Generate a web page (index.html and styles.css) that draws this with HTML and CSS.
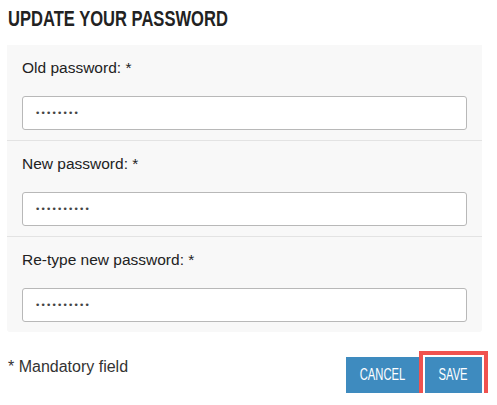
FILE: index.html
```html
<!DOCTYPE html>
<html lang="en">
<head>
<meta charset="utf-8">
<title>Update your password</title>
<link rel="stylesheet" href="styles.css">
</head>
<body>
<div class="page">
  <h1 class="title"><span class="condensed">UPDATE YOUR PASSWORD</span></h1>
  <form class="panel">
    <div class="field">
      <label class="label" for="old">Old password: *</label>
      <input class="input" id="old" type="text" value="••••••••">
    </div>
    <div class="field">
      <label class="label" for="new">New password: *</label>
      <input class="input" id="new" type="text" value="••••••••••">
    </div>
    <div class="field">
      <label class="label" for="re">Re-type new password: *</label>
      <input class="input" id="re" type="text" value="••••••••••">
    </div>
  </form>
  <div class="footer">
    <span class="note">* Mandatory field</span>
    <div class="actions">
      <button class="btn btn-cancel" type="button"><span class="btn-text">CANCEL</span></button>
      <button class="btn btn-save btn-focus" type="button"><span class="btn-text">SAVE</span></button>
    </div>
  </div>
</div>
</body>
</html>
```

FILE: styles.css
```css
* { box-sizing: border-box; }
html, body { margin: 0; background: #fff; }
body { font-family: "Liberation Sans", Arial, sans-serif; color: #222; }
.page { width: 482px; padding-left: 7px; }
.title {
  margin: 0;
  padding: 7px 0 0 1px;
  height: 45px;
  font-family: "Liberation Sans", Arial, sans-serif;
  font-weight: bold;
  font-size: 21.5px;
  line-height: 24px;
  color: #222;
  white-space: nowrap;
}
.condensed {
  display: inline-block;
  transform: scaleX(0.77);
  transform-origin: 0 50%;
}
.panel {
  background: #f8f8f8;
  border-radius: 0 0 3px 3px;
  display: flex;
  flex-direction: column;
}
.field {
  display: flex;
  flex-direction: column;
  padding: 14px 15px 10px;
  border-bottom: 1px solid #e3e3e3;
}
.field:last-child { border-bottom: 0; }
.label {
  font-size: 15.5px;
  line-height: 18px;
  margin-bottom: 19px;
  color: #222;
}
.input {
  height: 34px;
  border: 1px solid #b8b8b8;
  border-radius: 3px;
  background: #fff;
  padding: 0 12px;
  font-family: "DejaVu Sans", sans-serif;
  font-size: 9px;
  letter-spacing: 0.2px;
  color: #444;
  outline: none;
}
.footer {
  display: flex;
  justify-content: space-between;
  align-items: flex-start;
  margin-top: 25px;
}
.note {
  padding: 1px 0 0 1px;
  font-size: 16px;
  line-height: 18px;
  color: #333;
}
.actions { display: flex; gap: 6px; }
.btn {
  height: 36px;
  border: 0;
  border-radius: 0;
  background: #3e8bbf;
  color: #fff;
  font-family: "Liberation Sans", Arial, sans-serif;
  font-size: 17px;
  padding: 0;
  display: flex;
  align-items: center;
  justify-content: center;
  cursor: pointer;
}
.btn-cancel { width: 73px; }
.btn-save { width: 57px; }
.btn-text {
  display: inline-block;
  transform: scaleX(0.66);
  white-space: nowrap;
}
.btn-focus {
  box-shadow: 0 0 0 2px #fff, 0 0 0 6px #f0524f;
}
```
